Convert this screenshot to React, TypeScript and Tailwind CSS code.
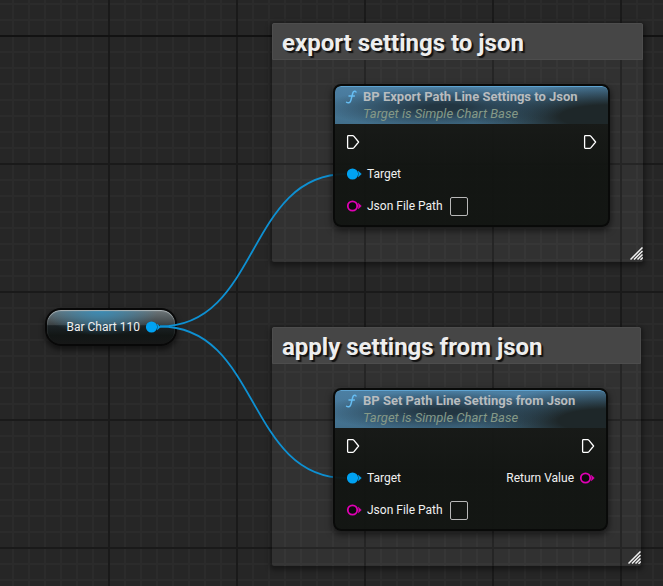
import React from 'react';

type PinKind = 'exec' | 'object' | 'string';

function Pin({ kind }: { kind: PinKind }) {
  if (kind === 'exec') {
    return (
      <svg width="14" height="16" viewBox="0 0 14 16" fill="none" className="shrink-0">
        <path d="M2.4 1.6H6.6Q7.4 1.6 8 2.3L12.6 8L8 13.7Q7.4 14.4 6.6 14.4H2.4Q1.6 14.4 1.6 13.6V2.4Q1.6 1.6 2.4 1.6Z" stroke="#fff" strokeWidth="1.3" strokeLinejoin="round" />
      </svg>
    );
  }
  const color = kind === 'object' ? '#00a2f2' : '#e000b4';
  return (
    <svg width="16" height="16" viewBox="0 0 16 16" className="shrink-0">
      <circle cx="6.5" cy="8" r="4.7" fill={kind === 'object' ? color : '#0c0a0c'} stroke={color} strokeWidth="1.8" />
      <path d="M12.2 5Q13.4 6.2 15.4 8Q13.4 9.8 12.2 11Q13.2 8 12.2 5Z" fill={color} stroke={color} strokeWidth="0.4" />
    </svg>
  );
}

function ResizeGrip() {
  return (
    <svg width="13" height="13" viewBox="0 0 13 13" className="absolute right-0 bottom-0.5" stroke="#f2f2f2" strokeWidth="1.5">
      <path d="M0.5 12.5L12.5 0.5M4 12.5L12.5 4M7.5 12.5L12.5 7.5M10.5 12.8L12.8 10.5" />
    </svg>
  );
}

function CommentBox({ title, className }: { title: string; className: string }) {
  return (
    <section className={`absolute rounded-xs bg-white/5 shadow-[0_2px_5px_2px_rgba(0,0,0,0.4)] ${className}`}>
      <h2 className="rounded-t-xs border border-[#4d4d4d] bg-[#464646] px-[9px] pt-[3px] text-2xl leading-8 font-bold text-[#eeeeee] [text-shadow:2px_2px_1px_#111]">
        {title}
      </h2>
      <ResizeGrip />
    </section>
  );
}

function FunctionNode({ id, title, returns, className }: { id: string; title: string; returns?: string; className: string }) {
  return (
    <article className={`absolute overflow-hidden rounded-lg border-2 border-[#090a09] bg-[linear-gradient(#1a1c1aee,#111411ee_60%)] shadow-[0_3px_6px_1px_rgba(0,0,0,0.5)] ${className}`}>
      <header className="flex h-[38px] gap-1 rounded-t-md border-t border-[#5fa3d0] bg-[radial-gradient(ellipse_45%_55%_at_40%_55%,#233642_15%,transparent),radial-gradient(ellipse_50%_90%_at_100%_80%,#1e2729_35%,transparent),linear-gradient(#4c7fa3,#426f8b)] pl-[9px]">
        <svg width="15" height="16" viewBox="0 0 15 16" fill="none" stroke="#66bdf2" strokeWidth="1.5" strokeLinecap="round" className="mt-0.5 shrink-0">
          <path d="M12 3C11.4 1.8 9.4 1.8 8.8 4L6.8 11.6C6.2 13.8 4 14.4 2.6 13.2M5 7H10.4" />
        </svg>
        <div>
          <h3 className="pt-0.5 text-[13px] leading-4 font-bold text-[#b8bcbf]">{title}</h3>
          <p className="text-[13px] leading-[18px] text-[#859987] italic">Target is Simple Chart Base</p>
        </div>
      </header>
      <div className="px-[11px] pt-0.5 pb-[3px] text-xs text-[#f0f0f0]">
        <div className="flex h-8 items-center justify-between">
          <Pin kind="exec" />
          <Pin kind="exec" />
        </div>
        <div className="flex h-8 items-center justify-between">
          <span className="flex items-center gap-[5px]"><Pin kind="object" />Target</span>
          {returns && <span className="flex items-center gap-[5px]">{returns}<Pin kind="string" /></span>}
        </div>
        <div className="flex h-8 items-center gap-[5px]">
          <Pin kind="string" />
          <label htmlFor={id}>Json File Path</label>
          <input id={id} type="text" className="ml-0.5 h-[19px] w-[18px] rounded-xs border border-[#b8b8b8] bg-transparent px-1 text-white outline-none" />
        </div>
      </div>
    </article>
  );
}

export default function App() {
  return (
    <main className="relative min-h-screen overflow-hidden bg-[#262626] font-[Roboto,sans-serif]">
      <div className="absolute inset-0 bg-[linear-gradient(90deg,#2b2b2b_2px,transparent_2px),linear-gradient(#2b2b2b_2px,transparent_2px)] bg-size-[16px_16px] bg-position-[12px_3px]" />
      <div className="absolute inset-0 bg-[linear-gradient(90deg,#1a1a1a_2px,transparent_2px),linear-gradient(#1a1a1a_2px,transparent_2px)] bg-size-[128px_128px] bg-position-[108px_35px]" />
      <div className="absolute inset-x-0 top-[35px] h-0.5 bg-[#121212]" />

      <CommentBox title="export settings to json" className="top-[23px] left-[272px] h-[239px] w-[371px]" />
      <CommentBox title="apply settings from json" className="top-[327px] left-[272px] h-[239px] w-[369px]" />

      <div className="absolute top-[308px] left-[45px] flex h-[38px] w-[132px] items-center justify-end gap-[5px] rounded-2xl border-2 border-[#080808] bg-[radial-gradient(ellipse_45%_75%_at_42%_0%,#3a8cb6,transparent),linear-gradient(#70787b,#3a4144_44%,#1b2225_46%,#121615_75%,#161717)] pr-3.5 text-xs text-[#f0f0f0] shadow-[0_3px_5px_1px_rgba(0,0,0,0.5)] inset-shadow-[0_1px_1px_#b0b8bb]">
        Bar Chart 110
        <Pin kind="object" />
      </div>

      <svg className="absolute top-0 left-0" width="400" height="586" viewBox="0 0 400 586" fill="none" stroke="#0e90d2" strokeWidth="1.8">
        <path d="M160 326.5C260 326.5 246 174 346 174" />
        <path d="M160 326.5C260 326.5 246 478 346 478" />
      </svg>

      <FunctionNode id="export-path" title="BP Export Path Line Settings to Json" className="top-[84px] left-[333px] w-[277px]" />
      <FunctionNode id="apply-path" title="BP Set Path Line Settings from Json" returns="Return Value" className="top-[388px] left-[333px] w-[275px]" />
    </main>
  );
}
